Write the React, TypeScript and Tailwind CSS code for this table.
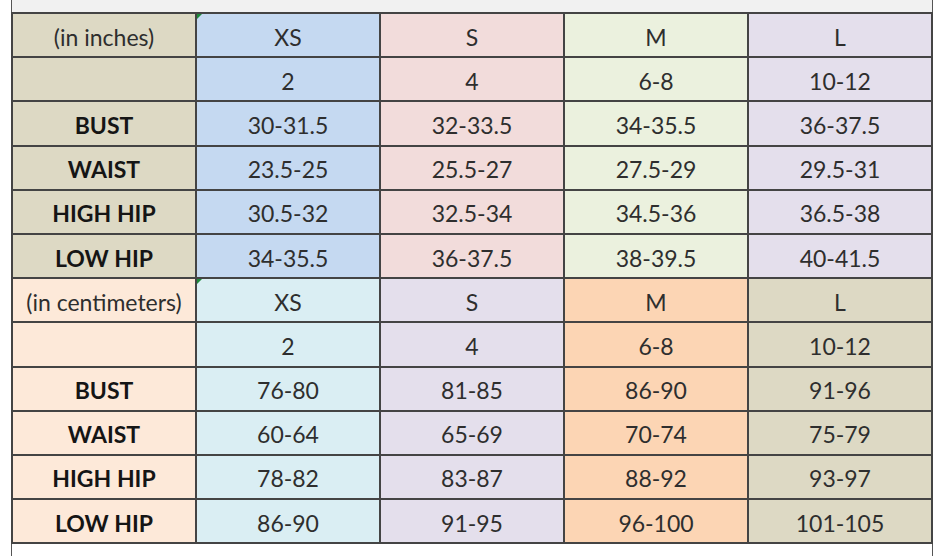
import React from "react";

const inchRows: [string, string, string, string, string, boolean][] = [
  ["(in inches)", "XS", "S", "M", "L", false],
  ["", "2", "4", "6-8", "10-12", false],
  ["BUST", "30-31.5", "32-33.5", "34-35.5", "36-37.5", true],
  ["WAIST", "23.5-25", "25.5-27", "27.5-29", "29.5-31", true],
  ["HIGH HIP", "30.5-32", "32.5-34", "34.5-36", "36.5-38", true],
  ["LOW HIP", "34-35.5", "36-37.5", "38-39.5", "40-41.5", true],
];

const cmRows: [string, string, string, string, string, boolean][] = [
  ["(in centimeters)", "XS", "S", "M", "L", false],
  ["", "2", "4", "6-8", "10-12", false],
  ["BUST", "76-80", "81-85", "86-90", "91-96", true],
  ["WAIST", "60-64", "65-69", "70-74", "75-79", true],
  ["HIGH HIP", "78-82", "83-87", "88-92", "93-97", true],
  ["LOW HIP", "86-90", "91-95", "96-100", "101-105", true],
];

const inchColors = ["bg-[#ddd9c4]", "bg-[#c5d9f1]", "bg-[#f2dcdb]", "bg-[#ebf1de]", "bg-[#e4dfec]"];
const cmColors = ["bg-[#fde9d9]", "bg-[#daeef3]", "bg-[#e4dfec]", "bg-[#fcd5b4]", "bg-[#ddd9c4]"];

function Section({ rows, colors }: { rows: typeof inchRows; colors: string[] }) {
  return (
    <>
      {rows.map((r, ri) =>
        [r[0], r[1], r[2], r[3], r[4]].map((v, ci) => (
          <div
            key={ri + "-" + ci}
            className={`relative h-[42.2px] flex items-center justify-center pt-[4px] text-[23px] leading-none whitespace-nowrap ${colors[ci]} ${
              ci === 0 && r[5] ? "font-bold text-[#151515]" : "text-[#2e2e2e]"
            }`}
          >
            {ri === 0 && ci === 1 && (
              <span className="absolute left-0 top-0 w-0 h-0 border-t-[5px] border-r-[5px] border-t-[#1e8a3a] border-r-transparent" />
            )}
            {v}
          </div>
        ))
      )}
    </>
  );
}

export default function App() {
  return (
    <div className="w-[945px] h-[556px] bg-white overflow-hidden" style={{ fontFamily: "Lato, 'Open Sans', sans-serif" }}>
      <div className="ml-[11px] w-[922px] h-full flex flex-col border-l border-r border-[#555555]">
        <div className="h-[12px] bg-[#f1f1f1] shrink-0" />
        <div className="grid grid-cols-5 gap-[2px] bg-[#444444] p-[2px] -mx-[1px]">
          <Section rows={inchRows} colors={inchColors} />
          <Section rows={cmRows} colors={cmColors} />
        </div>
        <div className="flex-1 bg-white" />
      </div>
    </div>
  );
}
